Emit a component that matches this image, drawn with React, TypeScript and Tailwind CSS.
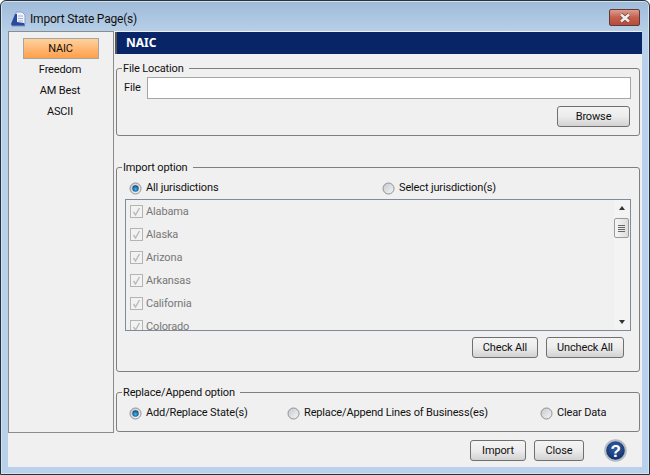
import { ReactNode } from "react";

const STATES = ["Alabama", "Alaska", "Arizona", "Arkansas", "California", "Colorado"];

function Radio({ label, on, className }: { label: string; on?: boolean; className?: string }) {
  return (
    <div className={`flex items-center gap-[4px] ${className ?? ""}`}>
      <svg width="13" height="13" viewBox="0 0 13 13">
        <defs>
          <linearGradient id="rg" x1="0" y1="0" x2="1" y2="1">
            <stop offset="0" stopColor="#c4c8cd" />
            <stop offset="1" stopColor="#f6f6f6" />
          </linearGradient>
          <radialGradient id="rb" cx="0.5" cy="0.6" r="0.6">
            <stop offset="0" stopColor="#45b8ee" />
            <stop offset="1" stopColor="#0b3f73" />
          </radialGradient>
        </defs>
        <circle cx="6.5" cy="6.5" r="5.5" fill="url(#rg)" stroke="#8b9097" />
        {on && <circle cx="6.5" cy="6.5" r="3.2" fill="url(#rb)" />}
      </svg>
      <span className="pt-[1px]">{label}</span>
    </div>
  );
}

function Btn({ children, className }: { children: ReactNode; className?: string }) {
  return (
    <button className={`h-[21px] rounded-[3px] border border-[#707070] bg-gradient-to-b from-[#f4f4f4] via-[#ececec] to-[#d2d2d2] pt-[1px] text-center text-[#111] ${className ?? ""}`}>
      {children}
    </button>
  );
}

function Group({ title, children, className }: { title: string; children: ReactNode; className?: string }) {
  return (
    <fieldset className={`rounded-[3px] border border-[#7f7f7f] ${className ?? ""}`}>
      <legend className="ml-[5px] pl-[1px] pr-[5px] leading-[13px]">{title}</legend>
      {children}
    </fieldset>
  );
}

function StateRow({ name }: { name: string }) {
  return (
    <div className="flex h-[23px] shrink-0 items-center gap-[3px] pl-[4px] text-[#777]">
      <svg width="13" height="13" viewBox="0 0 13 13">
        <rect x="0.5" y="0.5" width="12" height="12" fill="#f2f2f2" stroke="#b4b4b4" />
        <path d="M3.5 7 L5.5 10 L9.5 3" fill="none" stroke="#b9b9b9" strokeWidth="1.4" />
      </svg>
      <span className="pt-[1px]">{name}</span>
    </div>
  );
}

export default function App() {
  return (
    <div className="h-[475px] w-[650px] overflow-hidden rounded-t-[6px] border border-[#26323c] bg-gradient-to-b from-[#9fbbd8] to-[#b9d1ea] to-[7%] px-[7px] font-['Roboto',sans-serif] text-[11px] tracking-[-0.15px] text-[#111] shadow-[inset_0_0_0_1px_#d3e2f1]">
      {/* title bar */}
      <div className="flex h-[30px] items-center pt-[5px]">
        <svg width="16" height="16" viewBox="0 0 16 16" className="ml-[2px]">
          <path d="M6 1 H12 L15 4 V13 H6 Z" fill="#eef3fb" stroke="#8a9ccb" />
          <path d="M8 5 H13 M8 7.5 H13 M8 10 H13" stroke="#9fb1d6" />
          <path d="M1 13 L5 3 L7 3 L7 11 L14 12 L15 15 H2 Z" fill="#2c49a0" />
          <path d="M2 15 H15" stroke="#8d94a8" />
        </svg>
        <span className="ml-[4px] text-[12px] tracking-[-0.2px] text-[#111]">Import State Page(s)</span>
        <div className="ml-auto mb-[2px] mr-[2px] flex h-[17px] w-[31px] items-center justify-center rounded-[2px] border border-[#5f3a36] bg-gradient-to-b from-[#dd9c8f] via-[#c4604f] to-[#b84a38]">
          <svg width="14" height="10" viewBox="0 0 14 10">
            <path d="M3 1.5 L11 8.5 M11 1.5 L3 8.5" stroke="#7a3a30" strokeWidth="4" />
            <path d="M3 1.5 L11 8.5 M11 1.5 L3 8.5" stroke="#ececec" strokeWidth="2.6" />
          </svg>
        </div>
      </div>

      {/* client area */}
      <div className="h-[436px] bg-[#f0f0f0]">
        <div className="flex h-[402px]">
          {/* left nav */}
          <div className="flex w-[106px] shrink-0 flex-col items-center border border-[#8c8c8c] pt-[6px]">
            <div className="flex h-[21px] w-[76px] items-center justify-center border border-[#a5a5a5] bg-gradient-to-b from-[#ffd09c] to-[#ff9f48] pr-[1px] pt-[1px]">NAIC</div>
            <div className="flex h-[21px] items-center pr-[2px] pt-[1px]">Freedom</div>
            <div className="flex h-[21px] items-center pr-[2px] pt-[1px]">AM Best</div>
            <div className="flex h-[21px] items-center pr-[2px] pt-[1px]">ASCII</div>
          </div>

          {/* right side */}
          <div className="flex min-w-0 flex-1 flex-col pl-[1px]">
            <div className="mt-[1px] flex h-[22px] shrink-0 items-center border-l-2 border-[#555] bg-[#082567] pl-[9px] font-['Noto_Sans',sans-serif] text-[12px] font-bold tracking-normal text-white">NAIC</div>

            <div className="ml-[1px] mr-[2px] flex flex-col">
              <Group title="File Location" className="mt-[8px] h-[74px]">
                <div className="flex items-center pl-[7px] pr-[8px] pt-[2px]">
                  <span className="w-[23px] pt-[1px]">File</span>
                  <div className="h-[22px] flex-1 border border-[#a5a5a5] bg-white" />
                </div>
                <div className="mt-[7px] flex justify-end pr-[9px]">
                  <Btn className="w-[73px]">Browse</Btn>
                </div>
              </Group>

              <Group title="Import option" className="mt-[25px] h-[211px]">
                <div className="flex h-[20px] items-center pl-[12px] pt-[8px]">
                  <Radio label="All jurisdictions" on className="w-[253px]" />
                  <Radio label="Select jurisdiction(s)" />
                </div>
                <div className="ml-[8px] mr-[8px] mt-[5px] flex h-[132px] overflow-hidden border border-[#7f8a9a]">
                  <div className="flex min-w-0 flex-1 flex-col overflow-hidden">
                    {STATES.map((s) => (
                      <StateRow key={s} name={s} />
                    ))}
                  </div>
                  {/* scrollbar */}
                  <div className="relative flex w-[16px] shrink-0 flex-col items-center justify-between bg-[#f3f3f3] py-[6px]">
                    <div className="h-0 w-0 border-x-[3.5px] border-b-[4px] border-x-transparent border-b-[#333]" />
                    <div className="absolute left-0 top-[18px] flex h-[20px] w-[15px] flex-col items-center justify-center gap-[1px] rounded-[2px] border border-[#9a9a9a] bg-gradient-to-r from-[#f6f6f6] to-[#dcdcdc]">
                      <div className="h-[1px] w-[7px] bg-[#666]" />
                      <div className="h-[1px] w-[7px] bg-[#666]" />
                      <div className="h-[1px] w-[7px] bg-[#666]" />
                      <div className="h-[1px] w-[7px] bg-[#666]" />
                    </div>
                    <div className="h-0 w-0 border-x-[3.5px] border-t-[4px] border-x-transparent border-t-[#333]" />
                  </div>
                </div>
                <div className="mt-[6px] flex justify-end gap-[8px] pr-[15px]">
                  <Btn className="w-[66px]">Check All</Btn>
                  <Btn className="w-[78px]">Uncheck All</Btn>
                </div>
              </Group>

              <Group title="Replace/Append option" className="mt-[14px] h-[46px]">
                <div className="flex h-[28px] items-center pl-[12px]">
                  <Radio label="Add/Replace State(s)" on className="w-[158px]" />
                  <Radio label="Replace/Append Lines of Business(es)" className="w-[253px]" />
                  <Radio label="Clear Data" />
                </div>
              </Group>
            </div>
          </div>
        </div>

        {/* footer */}
        <div className="flex items-center pr-[15px] pt-[6px]">
          <div className="ml-auto flex items-center gap-[8px]">
            <Btn className="w-[56px]">Import</Btn>
            <Btn className="w-[50px]">Close</Btn>
          </div>
          <svg width="23" height="23" viewBox="0 0 23 23" className="ml-[20px]">
            <defs>
              <radialGradient id="hb" cx="0.5" cy="0.35" r="0.7">
                <stop offset="0" stopColor="#3560a8" />
                <stop offset="1" stopColor="#0b2860" />
              </radialGradient>
            </defs>
            <circle cx="11.5" cy="11.5" r="10.3" fill="url(#hb)" stroke="#b5bcc4" strokeWidth="2" />
            <text x="11.5" y="17.5" textAnchor="middle" fontSize="17" fontWeight="700" fill="#fff" fontFamily="'Liberation Sans', sans-serif">?</text>
          </svg>
        </div>
      </div>
    </div>
  );
}
